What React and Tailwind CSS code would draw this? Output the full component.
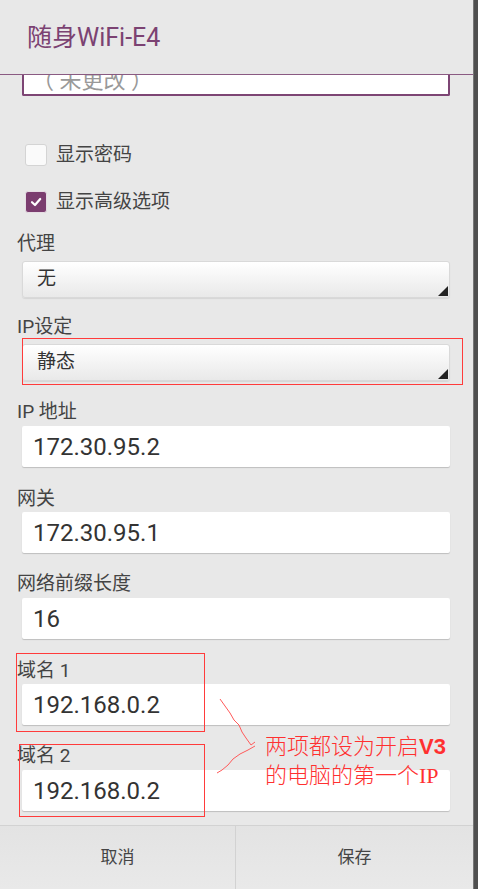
const cjk = "font-['Roboto','Noto_Sans_CJK_SC',sans-serif]";

function Spinner({ value }) {
  return (
    <div className="relative flex h-[37px] w-[428px] items-center rounded-[3px] border border-[#d9d9d9] bg-gradient-to-b from-white to-[#e9e9e9] pl-[14px] text-[19px] text-[#333] shadow-[0_1px_1px_rgba(0,0,0,0.08)]">
      {value}
      <svg className="absolute bottom-[1px] right-[1px]" width="10" height="10" viewBox="0 0 10 10">
        <path d="M10 0 L10 10 L0 10 Z" fill="#222" />
      </svg>
    </div>
  );
}

function TextInput({ value }) {
  return (
    <div className="flex h-[41px] w-[428px] items-center rounded-[2px] bg-white pl-[11px] text-[24px] text-[#333] shadow-[0_1px_1px_rgba(0,0,0,0.18)]">
      {value}
    </div>
  );
}

function Label({ children, className = "" }) {
  return (
    <div className={`ml-[17px] h-[24px] text-[19px] leading-[24px] text-[#444] ${className}`}>
      {children}
    </div>
  );
}

function Checkbox({ checked, label, className = "" }) {
  return (
    <div className={`ml-[25px] flex h-[22px] items-center ${className}`}>
      {checked ? (
        <div className="flex h-[22px] w-[22px] items-center justify-center rounded-[3px] border border-[#e6dde4] bg-[#7b3d6f]">
          <svg width="14" height="14" viewBox="0 0 14 14">
            <path d="M3 7.2 L6 10 L11.2 4" fill="none" stroke="white" strokeWidth="2.2" strokeLinecap="round" strokeLinejoin="round" />
          </svg>
        </div>
      ) : (
        <div className="h-[22px] w-[22px] rounded-[3px] border border-[#d4d4d4] bg-[#fafafa]" />
      )}
      <span className="ml-[9px] text-[19px] text-[#444]">{label}</span>
    </div>
  );
}

export default function App() {
  return (
    <div className={`flex h-[889px] w-[478px] overflow-hidden bg-[#e8e8e8] ${cjk}`}>
      <div className="flex w-[473px] flex-col">
        {/* Title */}
        <div className="flex h-[75px] shrink-0 items-center border-b border-[#8a5a82] pl-[27px] pt-[1px] text-[25px] text-[#7b4272]">
          随身WiFi-E4
        </div>

        {/* Scroll content */}
        <div className="relative flex-1 overflow-hidden">
          <div className="-mt-[19px] ml-[22px] flex h-[40px] w-[428px] items-center rounded-b-[2px] border-x-2 border-b-2 border-[#7d4574] bg-white pl-[8px] pt-[10px] text-[22px] text-[#999]">
            （ 未更改 ）
          </div>

          <Checkbox label="显示密码" className="mt-[48px]" />
          <Checkbox checked label="显示高级选项" className="mt-[25px]" />

          <Label className="mt-[19px]">代理</Label>
          <div className="ml-[22px] mt-[5px]">
            <Spinner value="无" />
          </div>

          <Label className="mt-[17px]">IP设定</Label>
          <div className="relative ml-[22px] mt-[5px] w-[428px]">
            <Spinner value="静态" />
            <div className="absolute -bottom-[4px] -right-[13px] -top-[6px] left-0 border border-[#ff3b3b]" />
          </div>

          <Label className="mt-[19px]">IP 地址</Label>
          <div className="ml-[22px] mt-[2px]">
            <TextInput value="172.30.95.2" />
          </div>

          <Label className="mt-[20px]">网关</Label>
          <div className="ml-[22px] mt-[1px]">
            <TextInput value="172.30.95.1" />
          </div>

          <Label className="mt-[19px]">网络前缀长度</Label>
          <div className="ml-[22px] mt-[2px]">
            <TextInput value="16" />
          </div>

          <div className="relative mt-[20px]">
            <Label>域名 1</Label>
            <div className="ml-[22px] mt-[1px]">
              <TextInput value="192.168.0.2" />
            </div>
            <div className="absolute -bottom-[7px] -top-[6px] left-[16px] w-[189px] border border-[#ff3b3b]" />
          </div>

          <div className="relative mt-[19px]">
            <Label>域名 2</Label>
            <div className="ml-[22px] mt-[2px]">
              <TextInput value="192.168.0.2" />
            </div>
            <div className="absolute -bottom-[6px] left-[19px] top-0 w-[186px] border border-[#ff3b3b]" />
          </div>

          {/* Annotation */}
          <svg className="absolute left-[214px] top-[620px]" width="46" height="85" viewBox="0 0 46 85">
            <polyline
              points="6,4 11,11 16,18 20,25 25,30 28,37 32,43 37,50 41,47"
              fill="none"
              stroke="#ff5a5a"
              strokeWidth="1"
            />
            <polyline
              points="41,51 34,55 26,59 19,64 14,70 8,75 3,78"
              fill="none"
              stroke="#ff5a5a"
              strokeWidth="1"
            />
          </svg>
          <div className="absolute left-[265px] top-[657px] text-[22px] font-light leading-[29px] text-[#ff3030]">
            <div>
              两项都设为开启
              <span className="font-['Liberation_Sans',sans-serif] font-bold">V3</span>
            </div>
            <div>
              的电脑的第一个
              <span className="font-['Liberation_Serif',serif]">IP</span>
            </div>
          </div>
        </div>

        {/* Buttons */}
        <div className="flex h-[64px] shrink-0 border-t border-[#d2d2d2] bg-gradient-to-b from-[#e3e3e3] to-[#e9e9e9] text-[17px] text-[#444]">
          <div className="flex w-[236px] items-center justify-center border-r border-[#d2d2d2]">取消</div>
          <div className="flex flex-1 items-center justify-center">保存</div>
        </div>
      </div>
      <div className="w-[5px] border-l border-[#777] bg-[#4f4f4f]" />
    </div>
  );
}
